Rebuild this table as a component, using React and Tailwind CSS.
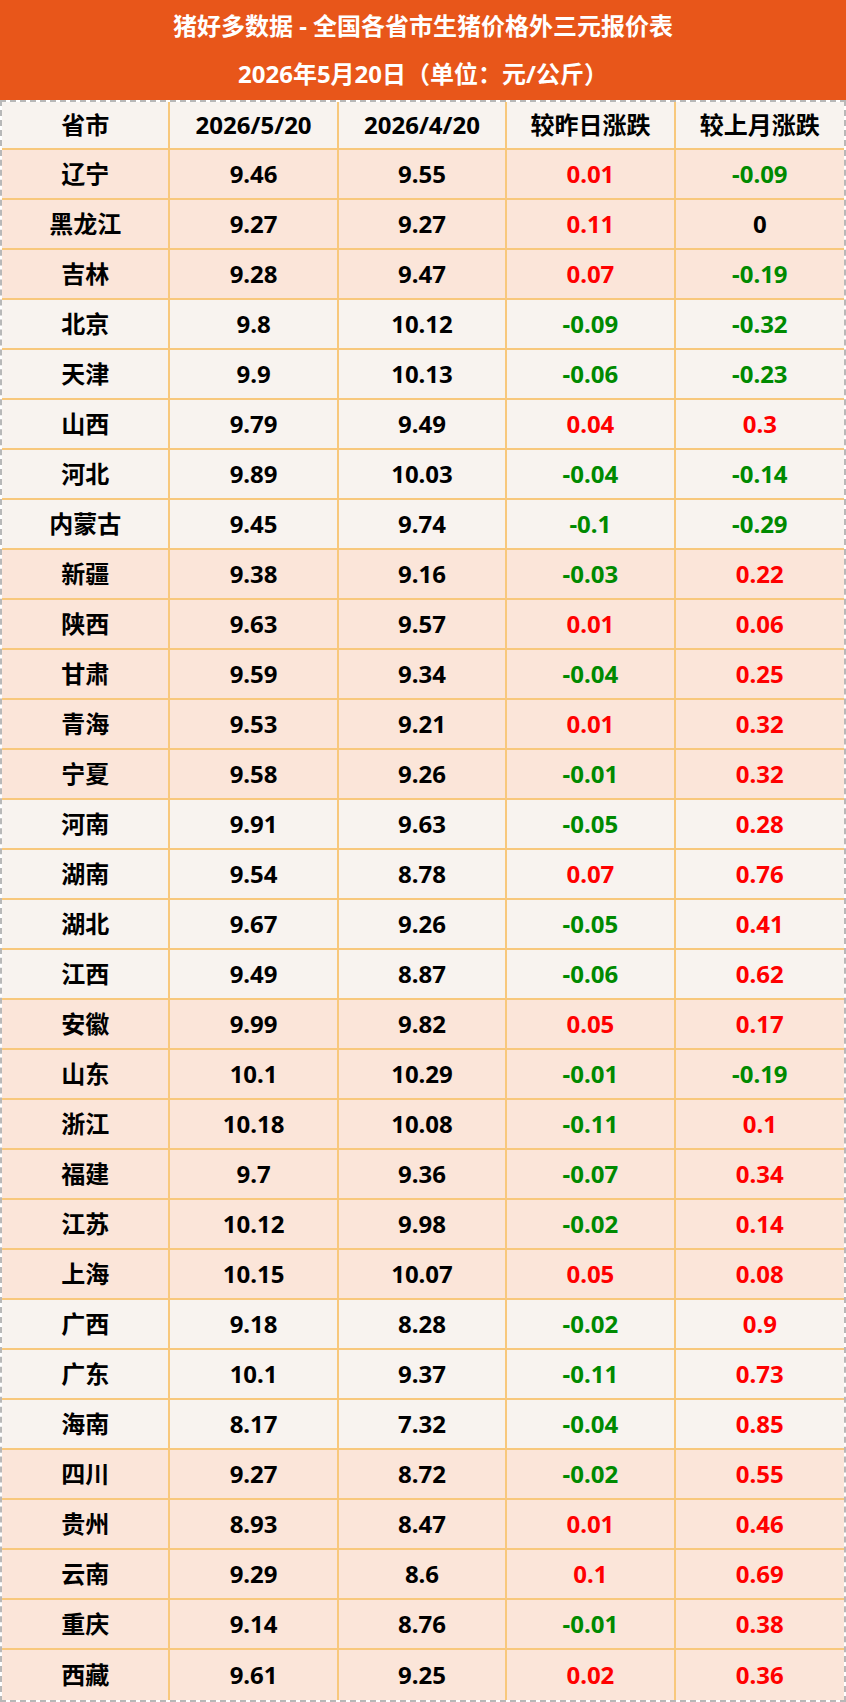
import React from 'react';

const groups = [
  { tone: 'peach', rows: [
    ['辽宁', '9.46', '9.55', '0.01', '-0.09'],
    ['黑龙江', '9.27', '9.27', '0.11', '0'],
    ['吉林', '9.28', '9.47', '0.07', '-0.19'],
  ] },
  { tone: 'light', rows: [
    ['北京', '9.8', '10.12', '-0.09', '-0.32'],
    ['天津', '9.9', '10.13', '-0.06', '-0.23'],
    ['山西', '9.79', '9.49', '0.04', '0.3'],
    ['河北', '9.89', '10.03', '-0.04', '-0.14'],
    ['内蒙古', '9.45', '9.74', '-0.1', '-0.29'],
  ] },
  { tone: 'peach', rows: [
    ['新疆', '9.38', '9.16', '-0.03', '0.22'],
    ['陕西', '9.63', '9.57', '0.01', '0.06'],
    ['甘肃', '9.59', '9.34', '-0.04', '0.25'],
    ['青海', '9.53', '9.21', '0.01', '0.32'],
    ['宁夏', '9.58', '9.26', '-0.01', '0.32'],
  ] },
  { tone: 'light', rows: [
    ['河南', '9.91', '9.63', '-0.05', '0.28'],
    ['湖南', '9.54', '8.78', '0.07', '0.76'],
    ['湖北', '9.67', '9.26', '-0.05', '0.41'],
    ['江西', '9.49', '8.87', '-0.06', '0.62'],
  ] },
  { tone: 'peach', rows: [
    ['安徽', '9.99', '9.82', '0.05', '0.17'],
    ['山东', '10.1', '10.29', '-0.01', '-0.19'],
    ['浙江', '10.18', '10.08', '-0.11', '0.1'],
    ['福建', '9.7', '9.36', '-0.07', '0.34'],
    ['江苏', '10.12', '9.98', '-0.02', '0.14'],
    ['上海', '10.15', '10.07', '0.05', '0.08'],
  ] },
  { tone: 'light', rows: [
    ['广西', '9.18', '8.28', '-0.02', '0.9'],
    ['广东', '10.1', '9.37', '-0.11', '0.73'],
    ['海南', '8.17', '7.32', '-0.04', '0.85'],
  ] },
  { tone: 'peach', rows: [
    ['四川', '9.27', '8.72', '-0.02', '0.55'],
    ['贵州', '8.93', '8.47', '0.01', '0.46'],
    ['云南', '9.29', '8.6', '0.1', '0.69'],
    ['重庆', '9.14', '8.76', '-0.01', '0.38'],
    ['西藏', '9.61', '9.25', '0.02', '0.36'],
  ] },
];

const rows = groups.flatMap((g) => g.rows.map((r) => ({ tone: g.tone, cells: r })));

function changeColor(v) {
  if (v === '0') return 'text-black';
  return v.startsWith('-') ? 'text-[#008a00]' : 'text-[#ff0000]';
}

export default function App() {
  return (
    <div
      className="w-[846px] h-[1702px] bg-white font-bold text-[24px]"
      style={{ fontFamily: '"Noto Sans", "Noto Sans CJK SC", sans-serif' }}
    >
      <div className="h-[100px] bg-[#e8561a] text-white flex flex-col">
        <div className="h-[52px] flex items-center justify-center">猪好多数据 - 全国各省市生猪价格外三元报价表</div>
        <div className="h-[48px] flex items-center justify-center pb-1">2026年5月20日（单位：元/公斤）</div>
      </div>

      <div className="border-2 border-dashed border-[#b8b8b8]">
        <div className="grid grid-cols-5 h-[48px] bg-[#f8f3ef] border-b-2 border-[#f8c87c]">
          {['省市', '2026/5/20', '2026/4/20', '较昨日涨跌', '较上月涨跌'].map((h, i) => (
            <div
              key={h}
              className={`flex items-center justify-center text-black ${i < 4 ? 'border-r-2 border-[#f8c87c]' : ''}`}
            >
              {h}
            </div>
          ))}
        </div>

        {rows.map((row, ri) => (
          <div
            key={row.cells[0]}
            className={`grid grid-cols-5 h-[50px] ${row.tone === 'peach' ? 'bg-[#fbe5d9]' : 'bg-[#f8f3ef]'} ${
              ri < rows.length - 1 ? 'border-b-2 border-[#f8c87c]' : ''
            }`}
          >
            {row.cells.map((c, ci) => (
              <div
                key={ci}
                className={`flex items-center justify-center ${ci < 4 ? 'border-r-2 border-[#f8c87c]' : ''} ${
                  ci >= 3 ? changeColor(c) : 'text-black'
                }`}
              >
                {c}
              </div>
            ))}
          </div>
        ))}
      </div>
    </div>
  );
}
